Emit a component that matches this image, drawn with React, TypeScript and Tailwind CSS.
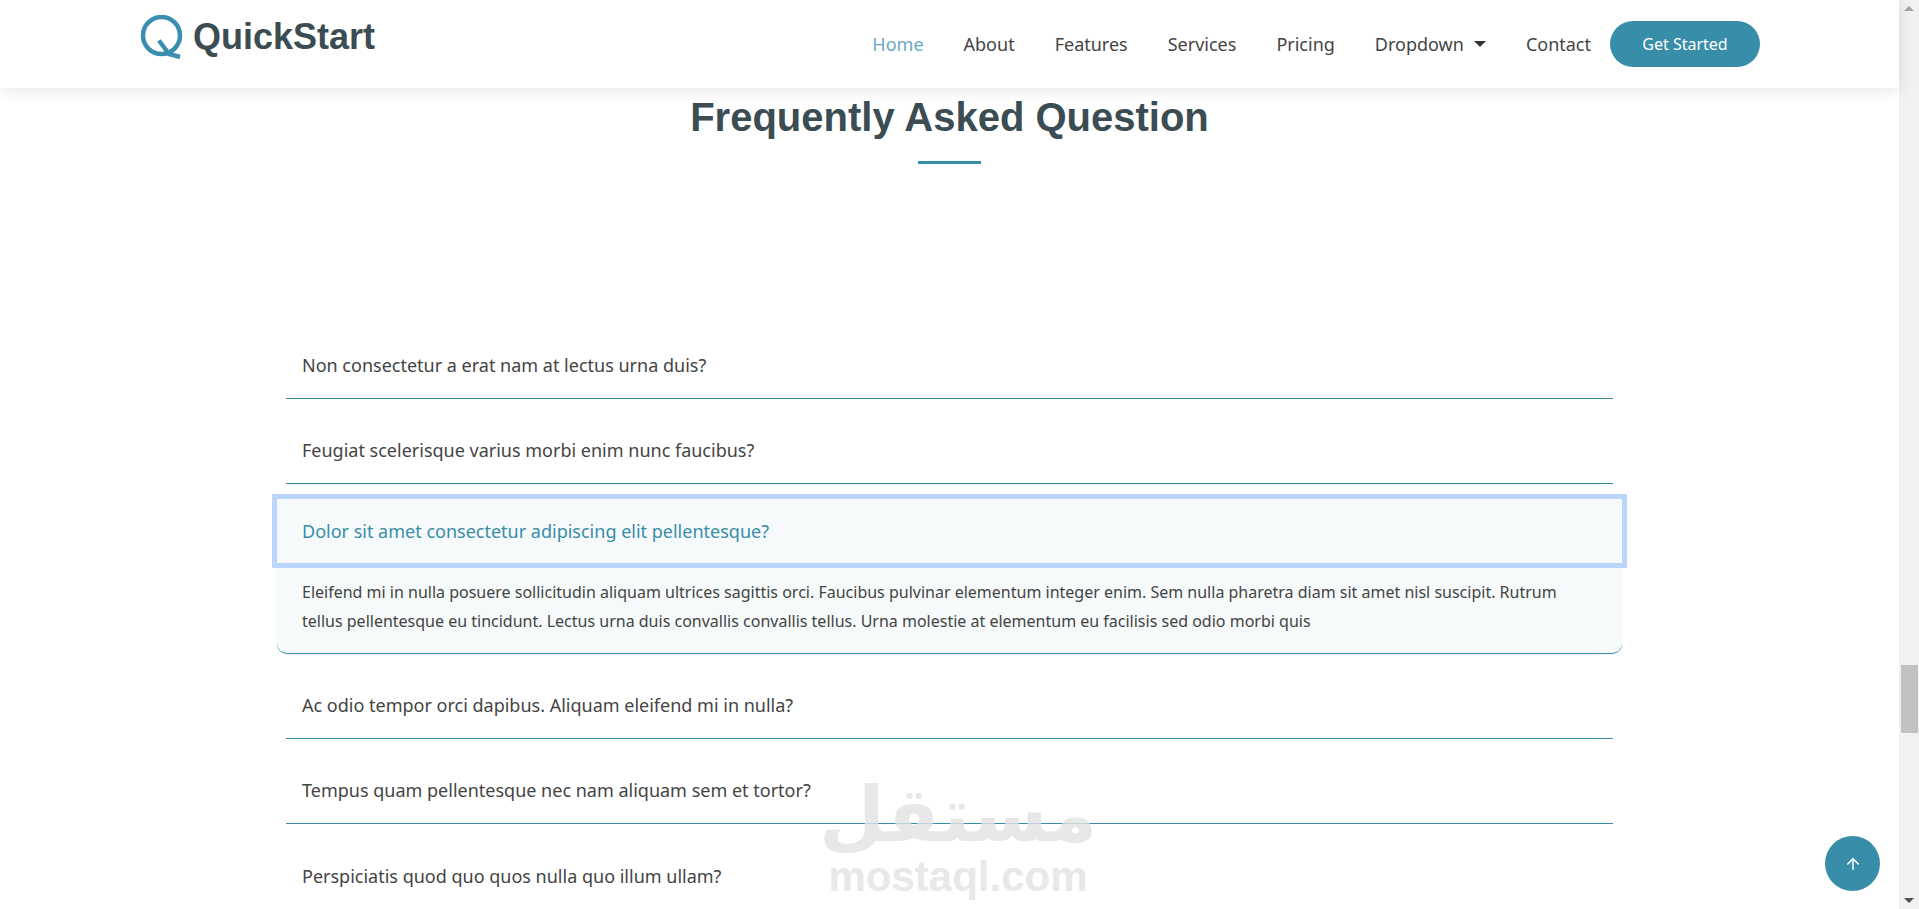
import React from 'react'
import { ArrowUp } from 'lucide-react'

const navLinks = ['About', 'Features', 'Services', 'Pricing']

const topQuestions = [
  'Non consectetur a erat nam at lectus urna duis?',
  'Feugiat scelerisque varius morbi enim nunc faucibus?',
]

const bottomQuestions = [
  'Ac odio tempor orci dapibus. Aliquam eleifend mi in nulla?',
  'Tempus quam pellentesque nec nam aliquam sem et tortor?',
]

function Logo() {
  return (
    <svg className="h-[44px] w-[44px] shrink-0" viewBox="0 0 44 44" fill="none">
      <circle cx="21.5" cy="20.5" r="18.5" stroke="#3a8fb0" strokeWidth="4.5" />
      <path d="M19 25.5 L29 39 L40 42" stroke="#3a8fb0" strokeWidth="4.5" />
    </svg>
  )
}

function Question({ text, last }: { text: string; last?: boolean }) {
  return (
    <div className={`mx-[14px] flex h-[85px] items-end ${last ? '' : 'border-b border-[#388da8]'}`}>
      <span className="pb-[17px] pl-[16px] text-[18px] leading-[32px] text-[#444444]">{text}</span>
    </div>
  )
}

export default function App() {
  return (
    <div className="flex h-[909px] w-full overflow-hidden bg-white font-['Noto_Sans',sans-serif]">
      <div className="relative min-w-0 flex-1">
        {/* Header */}
        <header className="relative z-10 flex h-[88px] items-center justify-between bg-white pl-[140px] pr-[139px] shadow-[0_2px_15px_rgba(0,0,0,0.1)]">
          <div className="-mt-[14px] flex items-center gap-[9px]">
            <Logo />
            <span className="font-['Liberation_Sans',sans-serif] text-[36px] font-bold leading-none text-[#3b4c53]">
              QuickStart
            </span>
          </div>
          <nav className="flex items-center text-[18px] text-[#444444]">
            <a className="text-[#6aa9c2]">Home</a>
            <div className="ml-[40px] flex items-center gap-[40px]">
              {navLinks.map((link) => (
                <a key={link}>{link}</a>
              ))}
              <a className="flex items-center gap-[10px]">
                Dropdown
                <span className="h-0 w-0 border-x-[6px] border-t-[6px] border-x-transparent border-t-[#333333]" />
              </a>
              <a>Contact</a>
            </div>
            <button className="ml-[19px] h-[46px] w-[150px] rounded-full bg-[#388da8] text-[16px] text-white">
              Get Started
            </button>
          </nav>
        </header>

        {/* FAQ */}
        <main>
          <div className="flex flex-col items-center pt-[6px]">
            <h2 className="font-['Liberation_Sans',sans-serif] text-[40px] font-bold leading-[46px] text-[#3b4c53]">
              Frequently Asked Question
            </h2>
            <div className="mt-[21px] h-[3px] w-[63px] bg-[#388da8]" />
          </div>
          <div className="mx-auto mt-[150px] w-[1355px]">
            {topQuestions.map((q) => (
              <Question key={q} text={q} />
            ))}
            <div className="mx-[5px] mt-[15px] rounded-b-[10px] border-b border-[#388da8] bg-[#f6fafb] shadow-[0_0_1px_rgba(56,141,168,0.4)]">
              <div className="flex h-[64px] items-center pl-[25px] text-[18px] text-[#388da8] outline-[5px] outline-[#bcd6fb]">
                Dolor sit amet consectetur adipiscing elit pellentesque?
              </div>
              <p className="px-[25px] pb-[17px] pt-[15px] text-[16px] leading-[29px] text-[#444444]">
                Eleifend mi in nulla posuere sollicitudin aliquam ultrices sagittis orci. Faucibus pulvinar elementum integer enim. Sem nulla pharetra diam sit amet nisl suscipit. Rutrum tellus pellentesque eu tincidunt. Lectus urna duis convallis convallis tellus. Urna molestie at elementum eu facilisis sed odio morbi quis
              </p>
            </div>
            {bottomQuestions.map((q) => (
              <Question key={q} text={q} />
            ))}
            <Question text="Perspiciatis quod quo quos nulla quo illum ullam?" last />
          </div>
        </main>

        {/* Watermark */}
        <div className="pointer-events-none absolute left-[842px] top-[775px] z-20 flex w-[232px] flex-col items-center opacity-80">
          <span className="font-['DejaVu_Sans',sans-serif] text-[76px] font-bold leading-[80px] text-[#e3e3e3]" dir="rtl">
            مستقل
          </span>
          <span className="font-['Liberation_Sans',sans-serif] text-[42px] font-bold leading-[44px] text-[#e3e3e3]">
            mostaql.com
          </span>
        </div>

        {/* Back to top */}
        <button className="absolute left-[1825px] top-[836px] z-20 flex h-[55px] w-[55px] items-center justify-center rounded-full bg-[#388da8] text-white">
          <ArrowUp size={18} />
        </button>
      </div>

      {/* Browser scrollbar */}
      <div className="flex w-[20px] shrink-0 flex-col items-center justify-between bg-[#f1f1f1] py-[6px]">
        <span className="h-0 w-0 border-x-[5px] border-b-[5px] border-x-transparent border-b-[#a3a3a3]" />
        <span className="h-0 w-0 border-x-[5px] border-t-[5px] border-x-transparent border-t-[#505050]" />
      </div>
      <div className="absolute left-[1901px] top-[665px] h-[68px] w-[17px] bg-[#c1c1c1]" />
    </div>
  )
}
